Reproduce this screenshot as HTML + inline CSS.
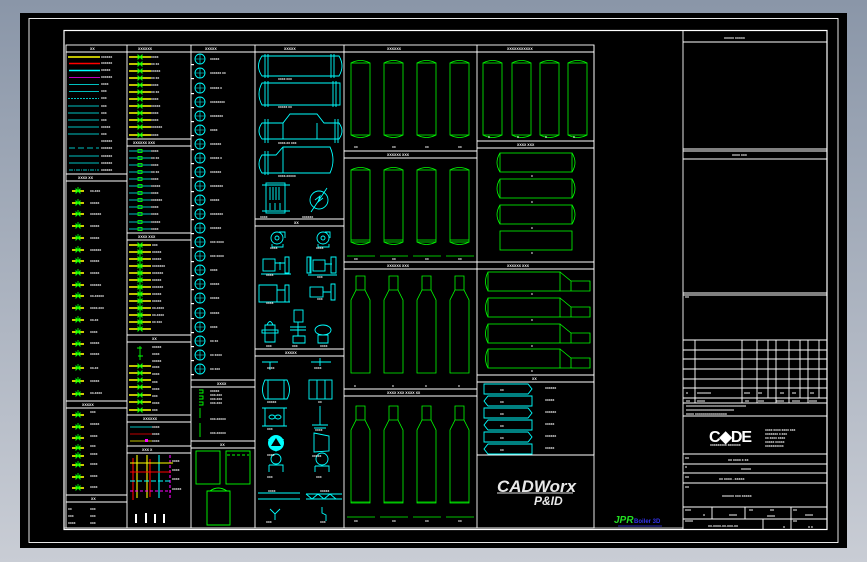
<!DOCTYPE html>
<html><head><meta charset="utf-8"><style>
html,body{margin:0;padding:0;width:867px;height:562px;overflow:hidden;background:linear-gradient(#8a96a8,#c9cdd5);}
svg{display:block}
text{font-family:"Liberation Sans",sans-serif;font-weight:bold;fill:#fff}
</style></head><body>
<svg width="867" height="562" viewBox="0 0 867 562" xmlns="http://www.w3.org/2000/svg">
<defs>
<g id="vl"><line x1="-6" y1="0" x2="6" y2="0" stroke="#ff0" stroke-width="1.6"/><path d="M-2,-2 L2,2 L2,-2 L-2,2Z M0,-4 V0" stroke="#0f0" fill="none" stroke-width="0.9"/></g>
<g id="vv"><line x1="-11" y1="0" x2="11" y2="0" stroke="#ff0" stroke-width="1.6"/><path d="M-2,-2 L2,2 L2,-2 L-2,2Z" stroke="#0f0" fill="none" stroke-width="0.9"/></g>
<g id="cv"><line x1="-11" y1="0" x2="11" y2="0" stroke="#0ff" stroke-width="0.8"/><rect x="-2" y="-1.5" width="4" height="3" stroke="#0f0" fill="none" stroke-width="0.9"/></g>
<g id="ci"><circle r="5" stroke="#0ff" fill="none" stroke-width="0.9"/><path d="M-5,0H5M0,-5V5" stroke="#0ff" stroke-width="0.6"/><rect x="-9" y="5" width="3" height="1.2" fill="#fff"/></g>
<g id="vs" stroke="#0f0" fill="none" stroke-width="0.8"><rect x="0" y="0" width="19" height="72"/><path d="M0,0 Q9.5,-5 19,0 M0,72 Q9.5,77 19,72"/></g>
<g id="bt" stroke="#0f0" fill="none" stroke-width="0.8"><path d="M5,0H14V14L19,24V97H0V24L5,14Z M5,14H14"/></g>
<g id="hz" stroke="#0f0" fill="none" stroke-width="0.8"><rect x="0" y="0" width="72" height="19"/><path d="M0,0 Q-6,9.5 0,19 M72,0 Q78,9.5 72,19"/></g>
<g id="ht" stroke="#0f0" fill="none" stroke-width="0.8"><rect x="0" y="0" width="72" height="19"/><path d="M72,0 L83,9 H102 V19 H72 M83,9V19 M0,0 Q-5,9.5 0,19"/></g>
<g id="tg" stroke="#0ff" fill="none" stroke-width="0.9"><path d="M0,0H44L48,5L44,10H0Z"/></g>
<g id="tg2" stroke="#0ff" fill="none" stroke-width="0.9"><path d="M4,0H48V10H4L0,5Z"/></g>
</defs>

<!-- black sheet -->
<rect x="20" y="13" width="827" height="535" fill="#000"/>
<rect x="29" y="18.5" width="809" height="524" fill="none" stroke="#fff" stroke-width="0.9"/>
<rect x="64" y="30.5" width="763" height="499" fill="none" stroke="#fff" stroke-width="1.2"/>
<line x1="64" y1="528" x2="683" y2="528" stroke="#fff" stroke-width="0.8"/>

<!-- table grid -->
<g stroke="#fff" stroke-width="0.9" fill="none">
<rect x="66" y="45" width="528" height="483"/>
<line x1="66" y1="52" x2="594" y2="52"/>
<line x1="127" y1="45" x2="127" y2="528"/><line x1="191" y1="45" x2="191" y2="528"/>
<line x1="255" y1="45" x2="255" y2="528"/><line x1="344" y1="45" x2="344" y2="528"/>
<line x1="477" y1="45" x2="477" y2="528"/>
<path d="M66,174H127M66,181H127M66,401H127M66,408H127M66,495H127M66,502H127"/>
<path d="M127,139H191M127,146H191M127,233H191M127,240H191M127,335H191M127,342H191M127,415H191M127,422H191M127,446H191M127,453H191"/>
<path d="M191,380H255M191,387H255M191,441H255M191,448H255"/>
<path d="M255,219H344M255,226H344M255,349H344M255,356H344"/>
<path d="M344,151H477M344,158H477M344,262H477M344,269H477M344,389H477M344,396H477"/>
<path d="M477,141H594M477,148H594M477,262H594M477,269H594M477,375H594M477,382H594"/>
<line x1="594" y1="45" x2="594" y2="455"/><line x1="477" y1="455" x2="594" y2="455"/>
</g>
<g font-size="3.5">
<text x="90" y="50">XX</text><text x="138" y="50">XXXXXX</text><text x="205" y="50">XXXXX</text><text x="284" y="50">XXXXX</text>
<text x="387" y="50">XXXXXX</text><text x="507" y="50">XXXXXXXXXXX</text>
<text x="78" y="179">XXXX XX</text><text x="133" y="144">XXXXXX XXX</text><text x="138" y="238">XXXX XXX</text>
<text x="152" y="340">XX</text><text x="143" y="420">XXXXXX</text><text x="142" y="451">XXX X</text>
<text x="82" y="406">XXXXX</text><text x="91" y="500">XX</text><text x="217" y="385">XXXX</text><text x="220" y="446">XX</text>
<text x="294" y="224">XX</text><text x="285" y="354">XXXXX</text>
<text x="387" y="156">XXXXXX XXX</text><text x="387" y="267">XXXXXX XXX</text><text x="387" y="394">XXXX XXX XXXX XX</text>
<text x="517" y="146">XXXX XXX</text><text x="507" y="267">XXXXXX XXX</text><text x="532" y="380">XX</text>
</g>

<!-- column 1 lines -->
<g stroke-width="1.6">
<line x1="68" y1="57" x2="100" y2="57" stroke="#ff0"/><line x1="69" y1="63.5" x2="100" y2="63.5" stroke="#f00"/>
<line x1="69" y1="70.5" x2="100" y2="70.5" stroke="#0ff"/><line x1="69" y1="77.5" x2="100" y2="77.5" stroke="#f0f" stroke-width="0.8"/>
</g>
<g stroke="#0ff" stroke-width="0.7">
<line x1="69" y1="84.5" x2="99" y2="84.5"/><line x1="69" y1="91.5" x2="99" y2="91.5"/><line x1="68" y1="98.5" x2="99" y2="98.5" stroke-dasharray="2,1"/>
<line x1="68" y1="106" x2="99" y2="106"/><line x1="68" y1="113" x2="99" y2="113"/><line x1="68" y1="120" x2="99" y2="120"/>
<line x1="68" y1="127" x2="99" y2="127"/><line x1="68" y1="134" x2="99" y2="134"/><line x1="69" y1="148" x2="99" y2="148" stroke-dasharray="6,3"/>
<line x1="69" y1="156" x2="99" y2="156"/><line x1="69" y1="163" x2="99" y2="163"/><line x1="69" y1="170" x2="99" y2="170" stroke-dasharray="4,1,1,1"/>
</g>
<g font-size="2.8">
<text x="101" y="58">XXXXXX</text><text x="101" y="64">XXXXXX</text><text x="101" y="71">XXXXX</text><text x="101" y="78">XXXXXX</text>
<text x="101" y="85">XXXX</text><text x="101" y="92">XXX</text><text x="101" y="99">XXX</text><text x="101" y="107">XXX</text><text x="101" y="114">XXX</text>
<text x="101" y="121">XXX</text><text x="101" y="128">XXXXX</text><text x="101" y="135">XXX</text><text x="101" y="142">XXXXXX</text><text x="101" y="149">XXXXXX</text>
<text x="101" y="157">XXXXXX</text><text x="101" y="164">XXXXXX</text><text x="101" y="171">XXXXXX</text>
</g>
<!-- column 1 valves -->
<g>
<use href="#vl" x="78" y="191"/><use href="#vl" x="78" y="203"/><use href="#vl" x="78" y="214"/><use href="#vl" x="78" y="226"/>
<use href="#vl" x="78" y="238"/><use href="#vl" x="78" y="250"/><use href="#vl" x="78" y="261"/><use href="#vl" x="78" y="273"/>
<use href="#vl" x="78" y="285"/><use href="#vl" x="78" y="296"/><use href="#vl" x="78" y="308"/><use href="#vl" x="78" y="320"/>
<use href="#vl" x="78" y="332"/><use href="#vl" x="78" y="344"/><use href="#vl" x="78" y="354"/><use href="#vl" x="78" y="368"/>
<use href="#vl" x="78" y="381"/><use href="#vl" x="78" y="394"/>
<use href="#vl" x="78" y="415"/><use href="#vl" x="78" y="427"/><use href="#vl" x="78" y="438"/><use href="#vl" x="78" y="448"/>
<use href="#vl" x="78" y="456"/><use href="#vl" x="78" y="465"/><use href="#vl" x="78" y="477"/><use href="#vl" x="78" y="488"/>
</g>
<g font-size="2.8">
<text x="90" y="192">XX-XXX</text><text x="90" y="204">XXXXX</text><text x="90" y="215">XXXXXX</text><text x="90" y="227">XXXXX</text>
<text x="90" y="239">XXXXX</text><text x="90" y="251">XXXXXX</text><text x="90" y="262">XXXXX</text><text x="90" y="274">XXXXX</text>
<text x="90" y="286">XXXXXX</text><text x="90" y="297">XX-XXXXX</text><text x="90" y="309">XXXX-XXX</text><text x="90" y="321">XX-XX</text>
<text x="90" y="333">XXXX</text><text x="90" y="344">XXXXX</text><text x="90" y="355">XXXXX</text><text x="90" y="369">XX-XX</text>
<text x="90" y="382">XXXXX</text><text x="90" y="394">XX-XXXX</text>
<text x="90" y="413">XXX</text><text x="90" y="425">XXXXX</text><text x="90" y="437">XXXX</text><text x="90" y="447">XXX</text>
<text x="90" y="455">XXXX</text><text x="90" y="465">XXXX</text><text x="90" y="477">XXXX</text><text x="90" y="488">XXXX</text>
<text x="68" y="510">XX</text><text x="90" y="510">XXX</text><text x="68" y="517">XXX</text><text x="90" y="517">XXX</text><text x="68" y="524">XXXX</text><text x="90" y="524">XXX</text>
</g>

<!-- column 2 -->
<g>
<use href="#vv" x="140" y="57"/><use href="#vv" x="140" y="64"/><use href="#vv" x="140" y="71"/><use href="#vv" x="140" y="78"/>
<use href="#vv" x="140" y="85"/><use href="#vv" x="140" y="92"/><use href="#vv" x="140" y="99"/><use href="#vv" x="140" y="106"/>
<use href="#vv" x="140" y="113"/><use href="#vv" x="140" y="120"/><use href="#vv" x="140" y="127"/><use href="#vv" x="140" y="135"/>
<use href="#cv" x="140" y="151"/><use href="#cv" x="140" y="158"/><use href="#cv" x="140" y="165"/><use href="#cv" x="140" y="172"/>
<use href="#cv" x="140" y="179"/><use href="#cv" x="140" y="186"/><use href="#cv" x="140" y="193"/><use href="#cv" x="140" y="200"/>
<use href="#cv" x="140" y="207"/><use href="#cv" x="140" y="214"/><use href="#cv" x="140" y="222"/><use href="#cv" x="140" y="229"/>
<line x1="140" y1="244" x2="140" y2="330" stroke="#0f0" stroke-width="1"/>
<use href="#vv" x="140" y="245"/><use href="#vv" x="140" y="252"/><use href="#vv" x="140" y="259"/><use href="#vv" x="140" y="266"/>
<use href="#vv" x="140" y="273"/><use href="#vv" x="140" y="280"/><use href="#vv" x="140" y="287"/><use href="#vv" x="140" y="294"/>
<use href="#vv" x="140" y="301"/><use href="#vv" x="140" y="308"/><use href="#vv" x="140" y="315"/><use href="#vv" x="140" y="322"/><use href="#vv" x="140" y="329"/>
<use href="#vv" x="140" y="366"/><use href="#vv" x="140" y="373"/><use href="#vv" x="140" y="380"/><use href="#vv" x="140" y="387"/>
<use href="#vv" x="140" y="395"/><use href="#vv" x="140" y="402"/><use href="#vv" x="140" y="410"/>
</g>
<path d="M140,346V360M137,348H142M138,356H143" stroke="#0f0" fill="none" stroke-width="0.9"/>
<line x1="130" y1="427" x2="152" y2="427" stroke="#0ff" stroke-width="0.8"/>
<line x1="130" y1="434" x2="152" y2="434" stroke="#f00" stroke-width="0.8"/>
<line x1="130" y1="441" x2="152" y2="441" stroke="#ff0" stroke-width="0.8"/><rect x="145" y="439" width="3" height="3" fill="#f0f"/>
<g stroke-width="1.1">
<path d="M137,455V498M147,455V498" stroke="#ff0"/><path d="M133,458V500M150,459V497" stroke="#f00"/>
<path d="M159,455V498" stroke="#0ff"/><path d="M170,455V498" stroke="#f0f" stroke-dasharray="3,2"/>
<path d="M130,463H173" stroke="#ff0"/><path d="M130,472H171" stroke="#f00"/><path d="M130,481H171" stroke="#0ff" stroke-dasharray="5,2"/><path d="M130,491H171" stroke="#f0f" stroke-dasharray="3,2"/>
</g>
<g fill="#fff"><rect x="135" y="514" width="2" height="9"/><rect x="145" y="513" width="2" height="10"/><rect x="154" y="514" width="2" height="9"/><rect x="163" y="514" width="2" height="9"/></g>
<g font-size="2.8">
<text x="151" y="58">XXXX</text><text x="151" y="65">XX XX</text><text x="151" y="72">XXXXX</text><text x="151" y="79">XX XX</text><text x="151" y="86">XXXX</text>
<text x="151" y="93">XX XX</text><text x="151" y="100">XXXX</text><text x="151" y="107">XXXXX</text><text x="151" y="114">XXXX</text><text x="151" y="121">XXXX</text>
<text x="151" y="128">XXXXXX</text><text x="151" y="136">XXXX</text>
<text x="151" y="152">XXXX</text><text x="151" y="159">XX XX</text><text x="151" y="166">XXXX</text><text x="151" y="173">XX XX</text><text x="151" y="180">XXXX</text>
<text x="151" y="187">XXXXX</text><text x="151" y="194">XXXX</text><text x="151" y="201">XXXXXX</text><text x="151" y="208">XXXX</text><text x="151" y="215">XXXX</text>
<text x="151" y="223">XXXXX</text><text x="151" y="230">XXXX</text>
<text x="152" y="246">XXX</text><text x="152" y="253">XXXXX</text><text x="152" y="260">XXXXX</text><text x="152" y="267">XXXXXXX</text><text x="152" y="274">XXXXXX</text>
<text x="152" y="281">XXXXX</text><text x="152" y="288">XXXXXX</text><text x="152" y="295">XXXXX</text><text x="152" y="302">XXXXX</text><text x="152" y="309">XX-XXXX</text>
<text x="152" y="316">XX-XXXX</text><text x="152" y="323">XX XXX</text>
<text x="152" y="348">XXXXX</text><text x="152" y="355">XXXX</text><text x="152" y="362">XXXXX</text><text x="152" y="368">XXXX</text>
<text x="152" y="375">XXXX</text><text x="152" y="383">XXX</text><text x="152" y="390">XXXX</text><text x="152" y="397">XXX</text><text x="152" y="404">XXXX</text><text x="152" y="411">XXX</text>
<text x="152" y="428">XXXX</text><text x="152" y="435">XXXX</text><text x="152" y="442">XXXX</text>
<text x="172" y="462">XXXX</text><text x="172" y="471">XXXX</text><text x="172" y="480">XXXX</text><text x="172" y="490">XXXXX</text>
</g>

<!-- column 3 circles -->
<g>
<use href="#ci" x="200" y="59"/><use href="#ci" x="200" y="73"/><use href="#ci" x="200" y="88"/><use href="#ci" x="200" y="102"/>
<use href="#ci" x="200" y="116"/><use href="#ci" x="200" y="130"/><use href="#ci" x="200" y="144"/><use href="#ci" x="200" y="158"/>
<use href="#ci" x="200" y="172"/><use href="#ci" x="200" y="186"/><use href="#ci" x="200" y="200"/><use href="#ci" x="200" y="214"/>
<use href="#ci" x="200" y="228"/><use href="#ci" x="200" y="242"/><use href="#ci" x="200" y="256"/><use href="#ci" x="200" y="270"/>
<use href="#ci" x="200" y="284"/><use href="#ci" x="200" y="298"/><use href="#ci" x="200" y="313"/><use href="#ci" x="200" y="327"/>
<use href="#ci" x="200" y="341"/><use href="#ci" x="200" y="355"/><use href="#ci" x="200" y="369"/>
</g>
<g font-size="2.8">
<text x="210" y="60">XXXXX</text><text x="210" y="74">XXXXXX XX</text><text x="210" y="89">XXXXX X</text><text x="210" y="103">XXXXXXXX</text>
<text x="210" y="117">XXXXXXX</text><text x="210" y="131">XXXX</text><text x="210" y="145">XXXXXX</text><text x="210" y="159">XXXXX X</text>
<text x="210" y="173">XXXXXX</text><text x="210" y="187">XXXXXXX</text><text x="210" y="201">XXXXX</text><text x="210" y="215">XXXXXXX</text>
<text x="210" y="229">XXXXXX</text><text x="210" y="243">XXX XXXX</text><text x="210" y="257">XXX XXXX</text><text x="210" y="271">XXXX</text>
<text x="210" y="285">XXXXX</text><text x="210" y="299">XXXXX</text><text x="210" y="314">XXXXX</text><text x="210" y="328">XXXX</text>
<text x="210" y="342">XX XX</text><text x="210" y="356">XX XXXX</text><text x="210" y="370">XX XXX</text>
<text x="210" y="392">XXXXX</text><text x="210" y="396">XXX-XXX</text><text x="210" y="400">XXX-XXX</text><text x="210" y="404">XXX-XXX</text><text x="210" y="420">XXX-XXXXX</text><text x="210" y="434">XXX-XXXXX</text>
</g>
<path d="M199,390H203V393H199M199,396H203V399H199M199,402H203V405H199M200,408V418M200,423V437" stroke="#0f0" fill="none" stroke-width="0.9"/>
<g stroke="#0f0" fill="none" stroke-width="0.9">
<rect x="196" y="451" width="24" height="33"/><rect x="226" y="451" width="24" height="33"/><path d="M227,455H249" stroke-dasharray="3,2"/>
<path d="M207,491H230V525H207Z M210,491Q218,485 227,491"/>
</g>

<!-- column 4: exchangers -->
<g stroke="#0ff" fill="none" stroke-width="0.9">
<path d="M262,56H339 Q345,66 339,76H262 Q255,66 262,56Z"/><path d="M265,54V78M268,54V78M331,54V78M334,54V78"/>
<path d="M262,83H340V105H262 Q256,94 262,83Z"/><path d="M265,81V107M268,81V107M333,81V107M336,81V107"/>
<path d="M262,123H283L290,114H317L324,123H339 Q345,131 339,139H262 Q256,131 262,123Z"/><path d="M265,119V143M268,119V143M335,119V143M338,119V143M283,123V139M317,123V139"/>
<path d="M262,155H276L283,147H330 Q336,160 330,173H262 Q256,164 262,155Z"/><path d="M265,151V175M268,151V175M283,147V173"/>
<rect x="266" y="183" width="19" height="30"/><path d="M270,187V200M273,187V200M276,187V200M279,187V200M270,203V210M275,203V210M280,203V210M262,185H290M262,211H290"/>
<circle cx="319" cy="200" r="9"/><path d="M311,212L327,188M315,200L320,196L318,202L323,198"/>
</g>
<g font-size="2.8"><text x="278" y="80">XXXX XXX</text><text x="278" y="108">XXXXX XX</text><text x="278" y="144">XXXX-XX XXX</text><text x="278" y="177">XXXX-XXXXX</text><text x="260" y="218">XXXX</text><text x="302" y="218">XXXXXX</text></g>
<!-- pumps -->
<g stroke="#0ff" fill="none" stroke-width="0.9">
<circle cx="277" cy="238" r="6"/><circle cx="277" cy="238" r="2"/><path d="M279,232H285V238M272,244V247H283V244"/>
<circle cx="323" cy="238" r="6"/><circle cx="323" cy="238" r="2"/><path d="M325,232H330V238M318,244V247H329V244"/>
<rect x="263" y="259" width="12" height="12"/><path d="M275,263H285M285,257V273H289V257Z M261,274H291M280,262V270"/>
<rect x="313" y="260" width="12" height="11"/><path d="M310,257V273M307,257V273H311V257Z M325,264H332M331,257V273H336V257Z M308,275H337"/>
<path d="M259,285H277V302H259Z M277,290H285M285,285V302H289V285Z M262,302H290"/>
<rect x="310" y="287" width="13" height="10"/><path d="M323,292H331M331,284V300H335V284Z"/>
<path d="M265,325H275V342H265Z M267,325Q270,318 273,325"/><rect x="262" y="330" width="16" height="3"/>
<rect x="294" y="310" width="9" height="12"/><path d="M290,327H306M290,330H306M298,322V336M293,336H305V343H293Z"/>
<ellipse cx="323" cy="330" rx="8" ry="5"/><path d="M318,335H328V343H318Z"/>
</g>
<g font-size="2.8"><text x="270" y="249">XXXX</text><text x="316" y="249">XXXX</text><text x="266" y="276">XXXX</text><text x="317" y="278">XXX</text><text x="266" y="304">XXXX</text><text x="317" y="300">XXX</text><text x="266" y="347">XXX</text><text x="292" y="347">XXX</text><text x="320" y="347">XXXX</text></g>
<!-- misc -->
<g stroke="#0ff" fill="none" stroke-width="0.9">
<path d="M262,362H278M270,362V370"/><path d="M311,362H331M320,358V366"/>
<path d="M265,380H287Q292,390 287,399H265Q260,390 265,380Z M268,380V399M284,380V399"/>
<rect x="309" y="380" width="23" height="19"/><path d="M317,380V399M325,380V399"/>
<rect x="265" y="408" width="19" height="18"/><path d="M262,408H287M262,426H287"/><ellipse cx="272" cy="417" rx="3" ry="2"/><ellipse cx="278" cy="417" rx="3" ry="2"/>
<path d="M320,406V425M312,425H328M314,428H326"/>
<path d="M314,433L329,436V451L314,452Z"/>
<circle cx="276" cy="459" r="5"/><path d="M269,465H283V472M269,465V472"/>
<circle cx="322" cy="459" r="6"/><path d="M315,466H329V472M315,466V472"/>
<path d="M258,493H300M258,499H300M306,494H342M306,499H342M306,494L312,499L318,494L324,499L330,494L336,499"/>
<path d="M270,509L275,514L280,509M275,514V520M322,507V513L326,515V521"/>
</g>
<path d="M268,439L284,439L276,452Z" fill="#0ff"/><circle cx="276" cy="443" r="8" fill="#0ff"/><path d="M271,446L276,438L281,446Z" fill="#000"/>
<g font-size="2.8"><text x="267" y="369">XXXX</text><text x="314" y="369">XXXX</text><text x="267" y="403">XXXXX</text><text x="318" y="403">XX</text><text x="267" y="430">XXX</text><text x="315" y="431">XXXX</text><text x="267" y="456">XXXX</text><text x="312" y="457">XXXXX</text><text x="267" y="478">XXX</text><text x="316" y="478">XXX</text><text x="268" y="492">XXXX</text><text x="320" y="492">XXXXX</text><text x="266" y="523">XXX</text><text x="320" y="523">XXX</text></g>

<!-- column 5 vessels -->
<g>
<use href="#vs" x="351" y="63"/><use href="#vs" x="384" y="63"/><use href="#vs" x="417" y="63"/><use href="#vs" x="450" y="63"/>
<use href="#vs" x="351" y="170"/><use href="#vs" x="384" y="170"/><use href="#vs" x="417" y="170"/><use href="#vs" x="450" y="170"/>
<use href="#bt" x="351" y="276"/><use href="#bt" x="384" y="276"/><use href="#bt" x="417" y="276"/><use href="#bt" x="450" y="276"/>
<use href="#bt" x="351" y="406"/><use href="#bt" x="384" y="406"/><use href="#bt" x="417" y="406"/><use href="#bt" x="450" y="406"/>
</g>
<g stroke="#0f0" stroke-width="0.8"><path d="M347,256H375M380,256H408M413,256H441M446,256H474M351,240H370M384,240H403M417,240H436M450,240H469M347,517H375M380,517H408M413,517H441M446,517H474M351,502H370M384,502H403M417,502H436M450,502H469"/></g>
<g font-size="2.8"><text x="354" y="148">XX</text><text x="392" y="148">XX</text><text x="425" y="148">XX</text><text x="458" y="148">XX</text>
<text x="354" y="260">XX</text><text x="392" y="260">XX</text><text x="425" y="260">XX</text><text x="458" y="260">XX</text>
<text x="354" y="387">X</text><text x="392" y="387">X</text><text x="425" y="387">X</text><text x="458" y="387">X</text>
<text x="354" y="522">XX</text><text x="392" y="522">XX</text><text x="425" y="522">XX</text><text x="458" y="522">XX</text></g>

<!-- column 6 -->
<g>
<use href="#vs" x="483" y="63"/><use href="#vs" x="512" y="63"/><use href="#vs" x="540" y="63"/><use href="#vs" x="568" y="63"/>
<use href="#hz" x="500" y="153"/><use href="#hz" x="500" y="179"/><use href="#hz" x="500" y="205"/><rect x="500" y="231" width="72" height="19" stroke="#0f0" fill="none" stroke-width="0.8"/>
<use href="#ht" x="488" y="272"/><use href="#ht" x="488" y="298"/><use href="#ht" x="488" y="324"/><use href="#ht" x="488" y="349"/>
<use href="#tg" x="484" y="384"/><use href="#tg2" x="484" y="396"/><use href="#tg" x="484" y="408"/><use href="#tg2" x="484" y="420"/><use href="#tg" x="484" y="432"/><use href="#tg2" x="484" y="444"/>
</g>
<g font-size="2.8"><text x="488" y="138">X</text><text x="517" y="138">X</text><text x="545" y="138">X</text><text x="573" y="138">X</text>
<text x="531" y="177">X</text><text x="531" y="203">X</text><text x="531" y="229">X</text><text x="531" y="254">X</text>
<text x="531" y="295">X</text><text x="531" y="321">X</text><text x="531" y="347">X</text><text x="531" y="372">X</text>
<text x="545" y="389">XXXXXX</text><text x="545" y="401">XXXXX</text><text x="545" y="413">XXXXXX</text><text x="545" y="425">XXXXX</text><text x="545" y="437">XXXXXX</text><text x="545" y="449">XXXXX</text>
<text x="500" y="391">XX</text><text x="500" y="403">XX</text><text x="500" y="415">XX</text><text x="500" y="427">XX</text><text x="500" y="439">XX</text><text x="500" y="451">XX</text></g>

<!-- CADWorx logo -->
<text x="497" y="492" font-size="17" font-style="italic" fill="#eee" style="fill:#e8e8e8">CADWorx</text>
<text x="534" y="505" font-size="12" font-style="italic" style="fill:#e8e8e8">P&amp;ID</text>
<line x1="497" y1="493" x2="573" y2="493" stroke="#ddd" stroke-width="1"/>
<!-- JPR logo -->
<text x="614" y="523" font-size="10" font-style="italic" style="fill:#2d2">JPR</text>
<text x="634" y="523" font-size="6" style="fill:#33e">Boiler 3D</text>
<line x1="618" y1="526" x2="662" y2="526" stroke="#33e" stroke-width="0.8"/>

<!-- title block -->
<g stroke="#fff" stroke-width="0.9" fill="none">
<line x1="683" y1="30" x2="683" y2="530"/>
<path d="M683,42H827M683,149H827M683,151H827M683,159H827M683,293H827M683,295H827M683,340H827M683,350H827M683,359H827M683,369H827M683,379H827M683,388H827M683,398H827M683,403H827M683,416H827M683,454H827M683,464H827M683,473H827M683,483H827M683,507H827M683,519H827"/>
<path d="M695,340V403M742,340V403M757,340V403M768,340V398M776,340V403M789,340V403M800,340V398M808,340V403M819,340V398"/>
<path d="M712,507V519M745,507V519M791,507V530M763,519V530"/>
</g>
<g font-size="3">
<text x="724" y="39">XXXXX XXXXX</text><text x="732" y="156">XXXX XXX</text><text x="685" y="298">XX</text>
<text x="686" y="394">X</text><text x="697" y="394">XXXXXXX</text><text x="744" y="394">XXX</text><text x="758" y="394">XX</text><text x="780" y="394">XX</text><text x="792" y="394">XX</text><text x="810" y="394">XX</text>
<text x="686" y="402">XX</text><text x="697" y="402">XXXX</text><text x="745" y="402">XX</text><text x="758" y="402">XXX</text><text x="776" y="402">XXXX</text><text x="792" y="402">XXXX</text><text x="809" y="402">XXXX</text>
<text x="686" y="407">XXXXXXXXXXXXXXXXXXXXXXXXXXXXXX</text><text x="686" y="411">XXXXXXXXXXXXXXXXXXXXXXXX</text><text x="686" y="415">XXXX XXXXXXXXXXXXXXXX</text>
<text x="685" y="459">XX</text><text x="728" y="461">XX XXXX X XX</text><text x="685" y="468">X</text><text x="741" y="470">XXXXX</text>
<text x="685" y="478">XX</text><text x="719" y="480">XX XXXX - XXXXX</text><text x="685" y="488">XX</text><text x="722" y="497">XXXXXX XXX XXXXX</text>
<text x="685" y="511">XXX</text><text x="703" y="516">X</text><text x="729" y="516">XXXX</text><text x="749" y="511">XX</text><text x="770" y="511">XX</text><text x="767" y="517">XXXX</text><text x="793" y="511">XX</text><text x="805" y="516">XXXX</text>
<text x="685" y="522">XXXX</text><text x="708" y="527">XX-XXXX-XX-XXX-XX</text><text x="783" y="528">X</text><text x="793" y="522">XX</text><text x="808" y="528">X X</text>
</g>
<text x="709" y="442" font-size="16" font-weight="bold" style="fill:#fff;letter-spacing:-1px">C◆DE</text>
<text x="710" y="446" font-size="2.8">XXXXXXXXX XXXXXXX</text>
<g font-size="2.8"><text x="765" y="431">XXXX XXXX XXXX XXX</text><text x="765" y="435">XXXXXXX X XXX</text><text x="765" y="439">XX XXXX XXXX</text><text x="765" y="443">XXXXX XXXXX</text><text x="765" y="447">XXXXXXXXXX</text></g>
</svg>
</body></html>
